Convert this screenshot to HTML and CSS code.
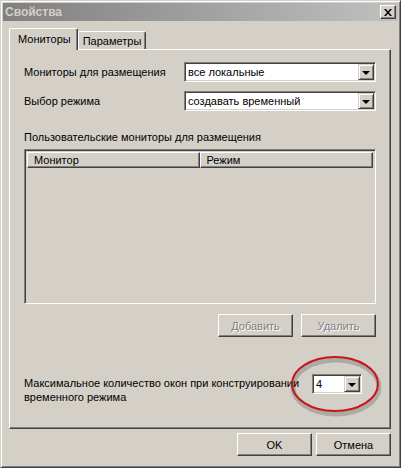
FILE: index.html
```html
<!DOCTYPE html>
<html lang="ru">
<head>
  <meta charset="UTF-8" />
  <meta name="viewport" content="width=device-width, initial-scale=1.0" />
  <title>Свойства</title>
  <link rel="stylesheet" href="styles.css">
</head>
<body>
  <div class="window">
    <div class="titlebar">
      <span class="title">Свойства</span>
      <span class="close">
        <svg width="8" height="7" viewBox="0 0 8 7"><path d="M0 0h2l2 2.5L6 0h2L5 3.5 8 7H6L4 4.5 2 7H0l3-3.5z" fill="#000"/></svg>
      </span>
    </div>

    <div class="tabs">
      <div class="tab active">Мониторы</div>
      <div class="tab">Параметры</div>
    </div>

    <div class="panel">
      <div class="row">
        <span class="label">Мониторы для размещения</span>
        <div class="select wide"><span class="value">все локальные</span><span class="arrow"></span></div>
      </div>
      <div class="row">
        <span class="label">Выбор режима</span>
        <div class="select wide"><span class="value">создавать временный</span><span class="arrow"></span></div>
      </div>

      <div class="caption">Пользовательские мониторы для размещения</div>
      <div class="list">
        <div class="list-head">
          <div class="col first">Монитор</div>
          <div class="col second">Режим</div>
        </div>
      </div>

      <div class="list-buttons">
        <button class="btn" disabled>Добавить</button>
        <button class="btn" disabled>Удалить</button>
      </div>

      <div class="max-row">
        <span class="label">Максимальное количество окон при конструировании<br>временного режима</span>
        <div class="select small"><span class="value">4</span><span class="arrow"></span></div>
      </div>
    </div>

    <div class="footer">
      <button class="btn">OK</button>
      <button class="btn">Отмена</button>
    </div>

    <svg class="mark" width="110" height="80" viewBox="0 0 110 80">
      <ellipse cx="55" cy="41" rx="43" ry="27" fill="none" stroke="rgba(0,0,0,0.18)" stroke-width="5"/>
      <ellipse cx="54" cy="38" rx="43" ry="27" fill="none" stroke="#c8141c" stroke-width="2"/>
    </svg>
  </div>
</body>
</html>
```

FILE: styles.css
```css
body {
  margin: 0;
  background: #d4d0c8;
  font-family: "Liberation Sans", Arial, sans-serif;
  font-size: 11px;
  color: #000;
}
.window {
  position: relative;
  width: 401px;
  height: 468px;
  box-sizing: border-box;
  border: 1px solid;
  border-color: #d4d0c8 #404040 #404040 #d4d0c8;
  box-shadow: inset 1px 1px #fff, inset -1px -1px #808080;
  padding: 2px;
  background: #d4d0c8;
}
.titlebar {
  height: 18px;
  display: flex;
  align-items: center;
  justify-content: space-between;
  padding: 0 2px 0 2px;
  background: linear-gradient(to right, #808080, #c0c0c0);
}
.title {
  color: #d4d0c8;
  font-weight: bold;
  font-size: 12px;
}
.close {
  width: 16px;
  height: 14px;
  box-sizing: border-box;
  display: flex;
  align-items: center;
  justify-content: center;
  background: #d4d0c8;
  border: 1px solid;
  border-color: #fff #404040 #404040 #fff;
  box-shadow: inset -1px -1px #808080;
}

/* tabs */
.tabs {
  display: flex;
  align-items: flex-end;
  margin: 7px 0 0 6px;
  height: 21px;
}
.tab {
  height: 18px;
  box-sizing: border-box;
  padding: 3px 4px 0 4px;
  border: 1px solid;
  border-bottom: none;
  border-color: #fff #404040 transparent #fff;
  box-shadow: inset -1px 0 #808080;
  border-radius: 2px 2px 0 0;
}
.tab.active {
  padding: 4px 6px 0 8px;
  position: relative;
  z-index: 1;
  margin-bottom: -1px;
  height: 22px;
  background: #d4d0c8;
}

.panel {
  margin: 0 7px 0 6px;
  height: 380px;
  box-sizing: border-box;
  border: 1px solid;
  border-color: #fff #404040 #404040 #fff;
  box-shadow: inset -1px -1px #808080;
  padding: 12px 14px 0 14px;
  display: flex;
  flex-direction: column;
}
.row {
  display: flex;
  align-items: center;
  height: 20px;
  margin-bottom: 9px;
}
.label {
  flex: 1;
  line-height: 14px;
}

/* combo box */
.select {
  height: 20px;
  box-sizing: border-box;
  display: flex;
  align-items: stretch;
  background: #fff;
  border: 1px solid;
  border-color: #808080 #fff #fff #808080;
  box-shadow: inset 1px 1px #404040, inset -1px -1px #d4d0c8;
  padding: 1px;
}
.select.wide { width: 192px; }
.select.small { width: 50px; margin-top: -2px; }
.value {
  flex: 1;
  padding-left: 2px;
  line-height: 16px;
}
.arrow {
  width: 16px;
  box-sizing: border-box;
  background: #d4d0c8;
  border: 1px solid;
  border-color: #d4d0c8 #404040 #404040 #d4d0c8;
  box-shadow: inset 1px 1px #fff, inset -1px -1px #808080;
  display: flex;
  align-items: center;
  justify-content: center;
}
.arrow::after {
  content: "";
  border-left: 4px solid transparent;
  border-right: 4px solid transparent;
  border-top: 4px solid #000;
  margin-top: 1px;
}

.caption {
  margin-top: 10px;
  line-height: 14px;
}
.list {
  margin-top: 5px;
  height: 155px;
  box-sizing: border-box;
  border: 1px solid;
  border-color: #808080 #fff #fff #808080;
  box-shadow: inset 1px 1px #404040, inset -1px -1px #d4d0c8;
  padding: 2px;
}
.list-head {
  display: flex;
  height: 16px;
}
.col {
  box-sizing: border-box;
  border: 1px solid;
  border-color: #fff #404040 #404040 #fff;
  box-shadow: inset -1px -1px #808080;
  padding-left: 6px;
  line-height: 14px;
}
.col.first { width: 173px; }
.col.second { width: 174px; }

.list-buttons {
  display: flex;
  justify-content: flex-end;
  gap: 8px;
  margin-top: 10px;
}
.btn {
  width: 75px;
  height: 23px;
  box-sizing: border-box;
  background: #d4d0c8;
  border: 1px solid;
  border-color: #fff #404040 #404040 #fff;
  box-shadow: inset -1px -1px #808080;
  font-family: inherit;
  font-size: 11px;
  color: #000;
  padding: 0;
}
.btn:disabled {
  color: #808080;
  text-shadow: 1px 1px #fff;
}

.max-row {
  display: flex;
  align-items: flex-start;
  margin-top: 39px;
}
.max-row .label {
  flex: none;
  width: 288px;
  white-space: nowrap;
}

.footer {
  display: flex;
  justify-content: flex-end;
  gap: 4px;
  margin: 4px 7px 0 0;
}

.mark {
  position: absolute;
  left: 280px;
  top: 345px;
  pointer-events: none;
}
```
